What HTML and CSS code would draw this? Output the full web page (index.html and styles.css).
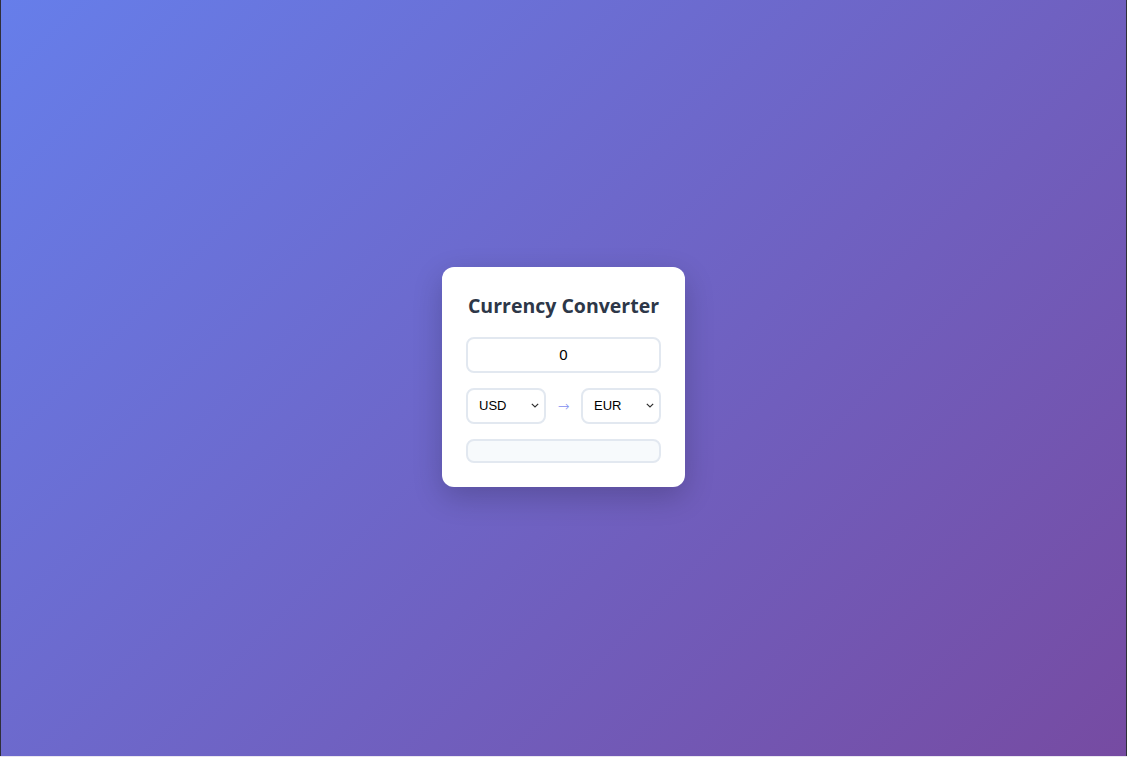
FILE: index.html
```html
<!DOCTYPE html>
<html lang="en">
<head>
<meta charset="utf-8">
<title>Currency Converter</title>
<link rel="stylesheet" href="styles.css">
</head>
<body>
  <div class="frame">
    <main class="card">
      <h2 class="title">Currency Converter</h2>
      <input class="amount" type="number" value="0">
      <div class="pair">
        <select class="currency">
          <option>USD</option>
          <option>EUR</option>
        </select>
        <span class="arrow">→</span>
        <select class="currency">
          <option>EUR</option>
          <option>USD</option>
        </select>
      </div>
      <div class="result"></div>
    </main>
  </div>
</body>
</html>
```

FILE: styles.css
```css
html, body {
  margin: 0;
  padding: 0;
  height: 100%;
}
body {
  background: #e9e6f0;
  font-family: "Liberation Sans", Arial, sans-serif;
}
.frame {
  box-sizing: border-box;
  height: 756px;
  border-left: 1px solid #2f2f3a;
  border-right: 1px solid #2f2f3a;
  background: linear-gradient(135deg, #667eea 0%, #764ba2 100%);
  display: flex;
  align-items: center;
  justify-content: center;
}
.card {
  box-sizing: border-box;
  width: 243px;
  background: #ffffff;
  border-radius: 12px;
  padding: 24px;
  box-shadow: 0 10px 30px rgba(0, 0, 0, 0.2);
  display: flex;
  flex-direction: column;
  gap: 15px;
  margin-top: -3px;
}
.title {
  margin: 0 0 1px;
  height: 30px;
  line-height: 30px;
  text-align: center;
  font-family: "Open Sans", "Noto Sans", sans-serif;
  font-size: 19.5px;
  font-weight: 700;
  color: #2d3748;
  white-space: nowrap;
}
.amount {
  box-sizing: border-box;
  width: 100%;
  height: 36px;
  border: 2px solid #e2e8f0;
  border-radius: 8px;
  font-family: "Liberation Sans", Arial, sans-serif;
  font-size: 15px;
  text-align: center;
  color: #000;
  outline: none;
  padding: 0 8px;
  -moz-appearance: textfield;
}
.amount::-webkit-outer-spin-button,
.amount::-webkit-inner-spin-button {
  -webkit-appearance: none;
  margin: 0;
}
.pair {
  display: flex;
  align-items: center;
  justify-content: space-between;
}
.currency {
  box-sizing: border-box;
  width: 80px;
  height: 36px;
  border: 2px solid #e2e8f0;
  border-radius: 8px;
  background-color: #fff;
  background-image: url("data:image/svg+xml,%3Csvg xmlns='http://www.w3.org/2000/svg' width='8' height='5' viewBox='0 0 8 5'%3E%3Cpath d='M0.8 0.8 L4 4 L7.2 0.8' fill='none' stroke='%23333' stroke-width='1.2'/%3E%3C/svg%3E");
  background-repeat: no-repeat;
  background-position: right 5px center;
  -webkit-appearance: none;
  appearance: none;
  font-family: "Liberation Sans", Arial, sans-serif;
  font-size: 13px;
  color: #000;
  padding: 0 16px 0 11px;
  outline: none;
}
.arrow {
  color: #7f8ff0;
  font-size: 14px;
  line-height: 1;
  font-family: "DejaVu Sans", sans-serif;
  font-weight: 300;
}
.result {
  box-sizing: border-box;
  height: 24px;
  background: #f7fafc;
  border: 2px solid #e2e8f0;
  border-radius: 8px;
}
```
